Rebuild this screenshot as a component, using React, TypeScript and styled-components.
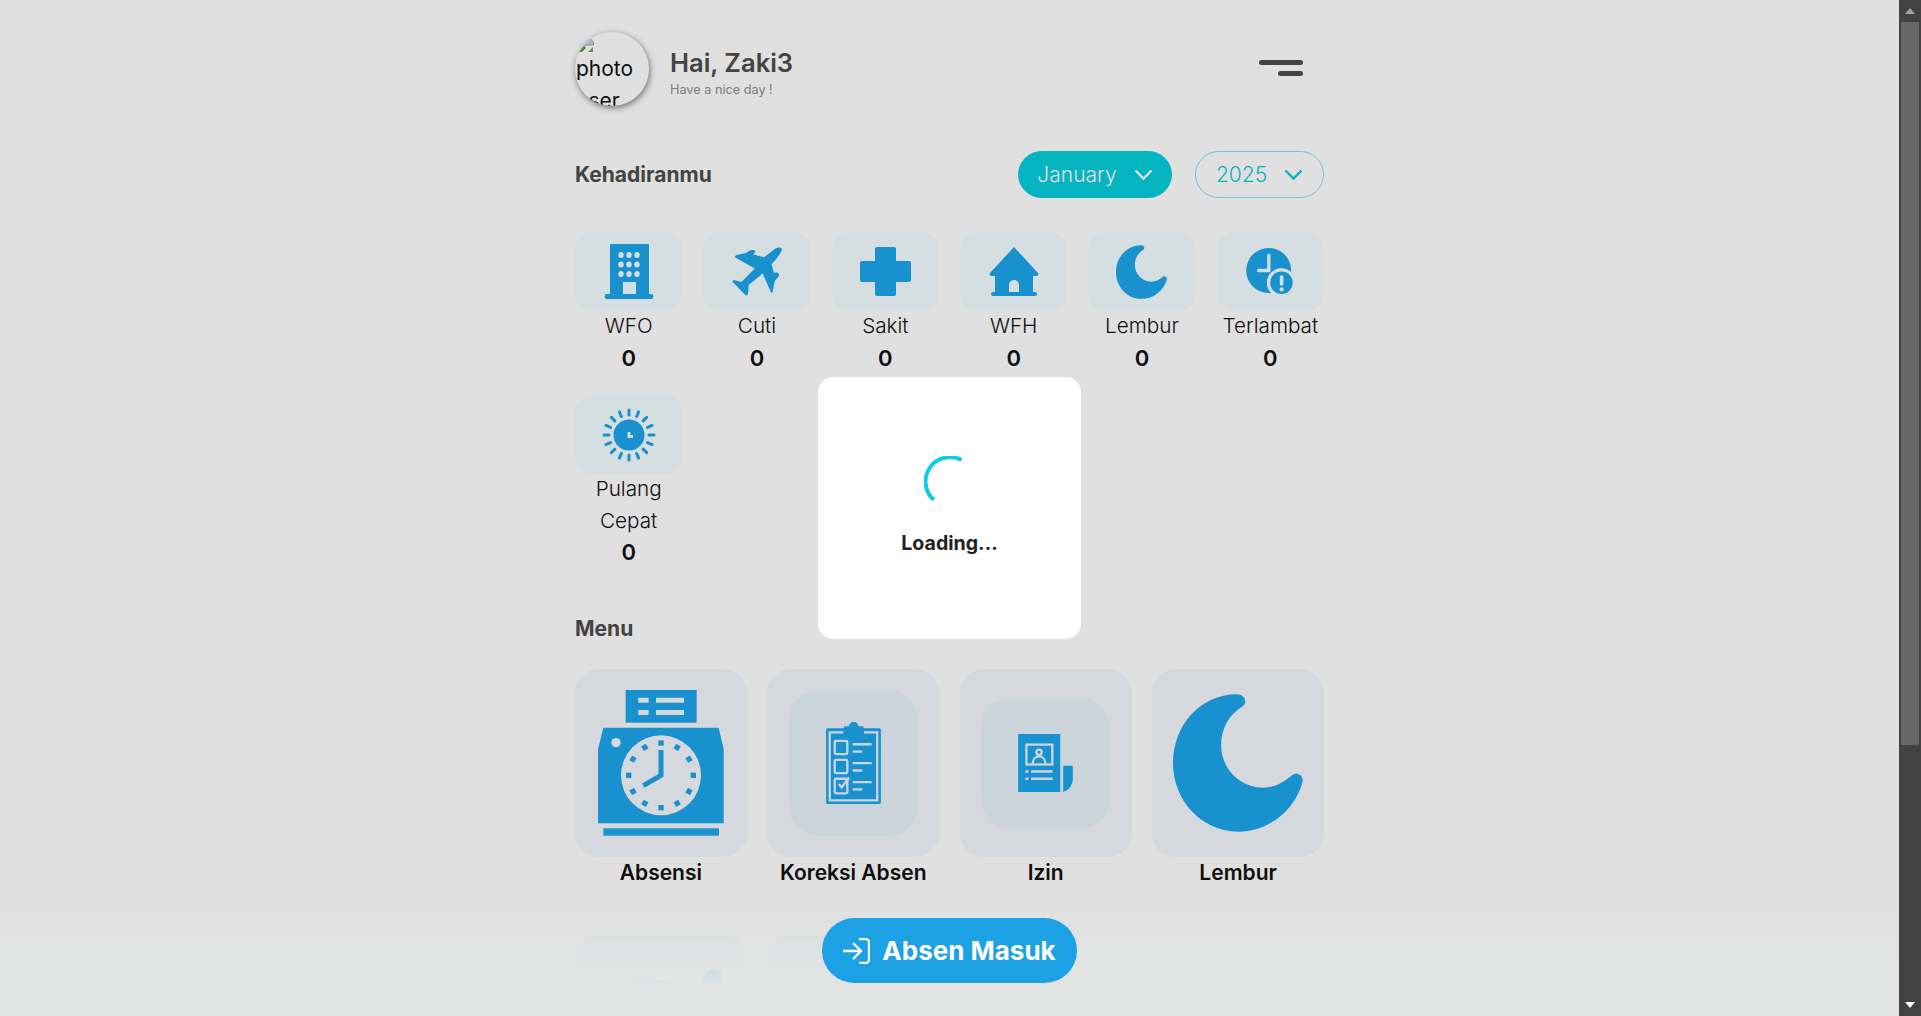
import React from "react";
import styled, { createGlobalStyle } from "styled-components";

const Global = createGlobalStyle`
  html, body { margin: 0; padding: 0; height: 100%; overflow: hidden; background: #fff; }
  body { font-family: Inter, "Open Sans", "Liberation Sans", sans-serif; }
  * { box-sizing: border-box; }
`;

const Screen = styled.div`
  display: flex;
  height: 100vh;
  position: relative;
`;
const Viewport = styled.main`
  flex: 1;
  min-width: 0;
  overflow-y: scroll;
  scrollbar-width: none;
  background: #fff;
`;
const Column = styled.div`
  width: 749px;
  margin: 0 auto;
  padding: 32px 0 241px;
`;
const Header = styled.header`
  display: flex;
  align-items: center;
  height: 74px;
`;
const Avatar = styled.div`
  width: 74px;
  height: 74px;
  flex: none;
  border-radius: 50%;
  overflow: hidden;
  padding: 5px 0 0 1px;
  font-size: 21px;
  line-height: 31.5px;
  color: #111;
  box-shadow: 1px 2px 6px rgba(0, 0, 0, 0.5);
  svg { display: block; margin-left: 2px; }
`;
const Greeting = styled.div`
  margin-left: 21px;
  flex: 1;
  padding-top: 5px;
`;
const Hello = styled.h1`
  margin: 0;
  font-size: 25.5px;
  line-height: 36px;
  font-weight: 600;
  color: #4d4d4d;
`;
const Sub = styled.p`
  margin: 0;
  font-size: 12.7px;
  line-height: 18px;
  color: #8f8f8f;
`;
const Burger = styled.button`
  display: flex;
  flex-direction: column;
  align-items: flex-end;
  gap: 6px;
  width: 44px;
  margin-right: 21px;
  padding: 0;
  border: 0;
  background: none;
  transform: translateY(-1px);
`;
const BurgerBar = styled.span<{ $w: number }>`
  display: block;
  width: ${(p) => p.$w}px;
  height: 5px;
  border-radius: 3px;
  background: #4d4d4d;
`;
const SectionRow = styled.div`
  display: flex;
  align-items: center;
  justify-content: space-between;
  margin-top: 45px;
`;
const SectionTitle = styled.h2`
  margin: 0;
  font-size: 21px;
  line-height: 32px;
  font-weight: 650;
  color: #4d4d4d;
`;
const Pills = styled.div`
  display: flex;
  gap: 23px;
`;
const Pill = styled.div<{ $on?: boolean; $w: number }>`
  display: flex;
  align-items: center;
  justify-content: center;
  gap: 17px;
  width: ${(p) => p.$w}px;
  height: 47px;
  border-radius: 24px;
  font-size: 21px;
  font-weight: 350;
  color: ${(p) => (p.$on ? "#fff" : "#05cddc")};
  background: ${(p) => (p.$on ? "#05cddc" : "transparent")};
  border: 1px solid ${(p) => (p.$on ? "#05cddc" : "#7fe3ea")};
`;
const StatGrid = styled.div`
  display: grid;
  grid-template-columns: repeat(6, 1fr);
  column-gap: 21px;
  row-gap: 21px;
  margin-top: 34px;
`;
const Stat = styled.div`
  display: flex;
  flex-direction: column;
  align-items: center;
  text-align: center;
`;
const StatTile = styled.div`
  display: flex;
  align-items: center;
  justify-content: center;
  width: 100%;
  height: 79px;
  border-radius: 18px;
  background: #f3fdff;
`;
const StatLabel = styled.div`
  font-size: 20.7px;
  line-height: 31.5px;
  font-weight: 340;
  color: #111;
  transform: translateY(-1px);
`;
const StatValue = styled.div`
  font-size: 22px;
  line-height: 31.5px;
  font-weight: 600;
  color: #111;
`;
const MenuTitle = styled(SectionTitle)`
  margin-top: 44px;
`;
const MenuGrid = styled.div`
  display: grid;
  grid-template-columns: repeat(4, 1fr);
  column-gap: 20.67px;
  row-gap: 47px;
  margin-top: 24.5px;
`;
const MenuItem = styled.div`
  text-align: center;
`;
const MenuTile = styled.div`
  display: flex;
  align-items: center;
  justify-content: center;
  height: 188px;
  border-radius: 24px;
  background: #f3f7fc;
`;
const MenuInner = styled.div<{ $h: number }>`
  display: flex;
  align-items: center;
  justify-content: center;
  width: 129px;
  height: ${(p) => p.$h}px;
  border-radius: 30px;
  background: #e9f2fa;
`;
const MenuLabel = styled.div`
  font-size: 21px;
  line-height: 31px;
  font-weight: 600;
  color: #111;
`;
const Overlay = styled.div`
  position: absolute;
  inset: 0 22px 0 0;
  display: flex;
  align-items: center;
  justify-content: center;
  background: rgba(0, 0, 0, 0.12);
`;
const Modal = styled.div`
  display: flex;
  flex-direction: column;
  align-items: center;
  justify-content: center;
  gap: 20px;
  width: 263px;
  height: 262px;
  border-radius: 15px;
  background: #fff;
  position: relative;
  z-index: 2;
`;
const LoadingText = styled.div`
  margin-bottom: 2px;
  font-size: 19.6px;
  line-height: 30px;
  font-weight: 700;
  color: #222;
`;
const BottomBar = styled.div`
  position: absolute;
  left: 0;
  right: 22px;
  bottom: 0;
  height: 121px;
  display: flex;
  justify-content: center;
  padding-top: 23px;
  background: linear-gradient(
    to bottom,
    rgba(227, 228, 228, 0) 0%,
    rgba(227, 228, 228, 0.75) 45%,
    rgba(227, 228, 228, 0.9) 62%,
    #e3e4e4 74%
  );
`;
const PunchButton = styled.button`
  display: flex;
  align-items: center;
  justify-content: center;
  gap: 12px;
  width: 255px;
  height: 65px;
  border: 0;
  border-radius: 33px;
  background: #1ca2e4;
  color: #fff;
  font: 700 26px Inter, "Open Sans", sans-serif;
`;
const Rail = styled.aside`
  flex: none;
  width: 22px;
  display: flex;
  flex-direction: column;
  align-items: center;
  background: #424242;
`;
const RailButton = styled.div`
  flex: none;
  height: 22px;
  width: 100%;
  display: flex;
  align-items: center;
  justify-content: center;
`;
const RailThumb = styled.div`
  flex: none;
  width: 18px;
  height: 723px;
  background: #686868;
`;
const RailSpace = styled.div`
  flex: 1;
`;

const BLUE = "#1ca5eb";
const PALE = "#f3fdff";

const Building = () => (
  <svg width="52" height="55" viewBox="0 0 52 55">
    <path fill={BLUE} d="M7 1a1 1 0 0 1 1-1h37a1 1 0 0 1 1 1v49h3a3 3 0 0 1 0 5H3a3 3 0 0 1 0-5h4z" />
    {[0, 1, 2].map((r) =>
      [0, 1, 2].map((c) => <ellipse key={`${r}${c}`} cx={18 + c * 8} cy={11 + r * 9.5} rx="2.7" ry="3" fill={PALE} />)
    )}
    <rect x="20" y="38" width="13" height="12" fill={PALE} />
  </svg>
);
const Plane = () => (
  <svg width="50" height="49" viewBox="38 35 150 148">
    <path fill={BLUE} d="M170 39C178 35 188 35 188 42C188 50 172 72 157 87L164 113L174 112C180 113 181 120 177 126L167 137L160 172L156 173L130 115L88 150L86 178L80 182L38 139L43 135L66 141L106 100L45 65L50 59L80 53L88 47C95 43 106 42 108 48C108 52 104 55 100 57L134 66Z" />
  </svg>
);
const Cross = () => (
  <svg width="51" height="49" viewBox="0 0 51 49">
    <path fill={BLUE} d="M15 2a2 2 0 0 1 2-2h17a2 2 0 0 1 2 2v12h13a2 2 0 0 1 2 2v17a2 2 0 0 1-2 2H36v12a2 2 0 0 1-2 2H17a2 2 0 0 1-2-2V35H2a2 2 0 0 1-2-2V16a2 2 0 0 1 2-2h13z" />
  </svg>
);
const House = () => (
  <svg width="50" height="49" viewBox="0 0 50 49">
    <path fill={BLUE} d="M25 0l24 26a2 2 0 0 1-1.500 3H44v16h2a2 2 0 0 1 0 4H4a2 2 0 0 1 0-4h2V29H2.500A2 2 0 0 1 1 26z" />
    <path fill={PALE} d="M20 45v-7a5 5 0 0 1 10 0v7z" />
  </svg>
);
const Moon = ({ w, h }: { w: number; h: number }) => (
  <svg width={w} height={h} viewBox="668 102 392 414" preserveAspectRatio="none">
    <path fill={BLUE} d="M860 103C885 103 895 128 876 140C838 163 813 205 813 255C813 326 870 383 940 383C972 383 1000 368 1025 347C1040 333 1064 345 1058 368C1035 450 957 515 865 515C756 515 668 423 668 310C668 197 750 103 860 103Z" />
  </svg>
);
const Late = () => (
  <svg width="48" height="48" viewBox="48 40 145 145">
    <circle cx="116.500" cy="108" r="68" fill={BLUE} />
    <path d="M117 62V108H86" fill="none" stroke={PALE} strokeWidth="10" strokeLinecap="round" />
    <circle cx="155" cy="145" r="44" fill={PALE} />
    <circle cx="155" cy="145" r="34" fill={BLUE} />
    <rect x="150" y="122" width="11" height="32" rx="5.500" fill={PALE} />
    <circle cx="155.500" cy="165" r="6.500" fill={PALE} />
  </svg>
);
const Sun = () => (
  <svg width="54" height="54" viewBox="-27 -27 54 54">
    {Array.from({ length: 16 }).map((_, i) => (
      <line key={i} x1="0" y1="-20" x2="0" y2="-25" stroke={BLUE} strokeWidth="3" strokeLinecap="round" transform={`rotate(${i * 22.5})`} />
    ))}
    <circle r="15.500" fill={BLUE} />
    <path d="M0-3v4.500h4" fill="none" stroke={PALE} strokeWidth="3" />
  </svg>
);
const Chevron = ({ color }: { color: string }) => (
  <svg width="19" height="12" viewBox="0 0 19 12">
    <path d="M1.500 1.500l8 8 8-8" fill="none" stroke={color} strokeWidth="2.400" />
  </svg>
);
const TimeClock = () => {
  const ticks = Array.from({ length: 12 }).map((_, i) => i * 30);
  return (
    <svg width="126" height="146" viewBox="114 90 378 438">
      <rect x="197" y="90" width="213" height="98" fill={BLUE} />
      <path fill="#f3f7fc" d="M235 113h31v15h-31zM288 113h84v15h-84zM235 150h31v15h-31zM288 150h84v15h-84z" />
      <path fill={BLUE} d="M130 203H476L491 268V490H114V268Z" />
      <circle cx="168" cy="248" r="14" fill="#f3f7fc" />
      <circle cx="303" cy="346" r="120" fill="#f3f7fc" />
      {ticks.map((a) => (
        <rect key={a} x="295" y="241" width="16" height="16" fill={BLUE} transform={`rotate(${a} 303 346)`} />
      ))}
      <path d="M303 270V346L250 377" fill="none" stroke={BLUE} strokeWidth="15" />
      <rect x="130" y="505" width="347" height="22" fill={BLUE} />
    </svg>
  );
};
const Clipboard = () => (
  <svg width="55" height="82" viewBox="798 185 165 247">
    <path fill={BLUE} d="M803 204H852V198H866C870 180 892 180 896 198H910V204H958a5 5 0 0 1 5 5V427a5 5 0 0 1-5 5H803a5 5 0 0 1-5-5V209a5 5 0 0 1 5-5z" />
    <g fill="none" stroke="#e9f2fa" strokeWidth="7">
      <path d="M850 216H809V421H952V216H912" />
      <rect x="824" y="242" width="38" height="40" rx="4" />
      <rect x="824" y="299" width="38" height="40" rx="4" />
      <rect x="824" y="356" width="38" height="44" rx="4" />
      <path d="M878 252H935M878 274H907M878 309H935M878 331H907M878 366H935M878 388H907" />
      <path d="M836 372l9 10 22-30" />
    </g>
  </svg>
);
const Document = () => (
  <svg width="55" height="58" viewBox="204 222 165 175">
    <rect x="204" y="222" width="127" height="175" fill={BLUE} />
    <path fill={BLUE} d="M340 318H369V358A40 40 0 0 1 340 397Z" />
    <g fill="none" stroke="#e9f2fa" strokeWidth="7">
      <rect x="229" y="254" width="78" height="60" />
      <circle cx="267" cy="277" r="8" />
      <path d="M248 312c0-30 38-30 38 0" />
    </g>
    <path stroke="#e9f2fa" strokeWidth="8" d="M243 335H308M243 357H308M226 335H235M226 357H235" />
  </svg>
);
const FadedIcon = () => (
  <svg width="126" height="146" viewBox="0 0 126 146">
    <path fill={BLUE} d="M103 28C108 8 124 8 126 28V146H0V36C30 26 48 16 60 24Z" />
  </svg>
);
const LoginIcon = () => (
  <svg width="27" height="26" viewBox="0 0 27 26">
    <path d="M16 1.200h7a3 3 0 0 1 3 3v17.600a3 3 0 0 1-3 3h-7M0 13h18M10 5l8 8-8 8" fill="none" stroke="#fff" strokeWidth="2.300" />
  </svg>
);
const BrokenImage = () => (
  <svg width="16" height="16" viewBox="0 0 16 16">
    <path fill="#c3d2ea" stroke="#a0a0a0" strokeWidth="1" d="M0.500 0.500H11L15.500 5V8L8 8L0.500 15.500Z" />
    <path fill="#5aa03c" d="M1 15L6 9L8 11L4 15Z" />
    <path fill="#7a9a6a" d="M10 15L15 10V15Z" />
  </svg>
);
const Spinner = () => (
  <svg width="52" height="52" viewBox="0 0 52 52">
    <path d="M37.500 3.900A24.500 24.500 0 0 0 9.700 43.800" fill="none" stroke="#0dcde0" strokeWidth="4" />
  </svg>
);

const stats: { label: string; icon: React.ReactNode }[] = [
  { label: "WFO", icon: <Building /> },
  { label: "Cuti", icon: <Plane /> },
  { label: "Sakit", icon: <Cross /> },
  { label: "WFH", icon: <House /> },
  { label: "Lembur", icon: <Moon w={51} h={54} /> },
  { label: "Terlambat", icon: <Late /> },
  { label: "Pulang Cepat", icon: <Sun /> },
];

const menus: { key: string; label?: string; icon: React.ReactNode }[] = [
  { key: "absensi", label: "Absensi", icon: <TimeClock /> },
  { key: "koreksi", label: "Koreksi Absen", icon: <MenuInner $h={146}><Clipboard /></MenuInner> },
  { key: "izin", label: "Izin", icon: <MenuInner $h={131}><Document /></MenuInner> },
  { key: "lembur", label: "Lembur", icon: <Moon w={130} h={138} /> },
  { key: "faded-a", icon: <FadedIcon /> },
  { key: "faded-b", icon: <MenuInner $h={131} /> },
];

export default function App() {
  return (
    <>
      <Global />
      <Screen>
        <Viewport>
          <Column>
            <Header>
              <Avatar>
                <BrokenImage />
                photo user
              </Avatar>
              <Greeting>
                <Hello>Hai, Zaki3</Hello>
                <Sub>Have a nice day !</Sub>
              </Greeting>
              <Burger aria-label="Menu">
                <BurgerBar $w={44} />
                <BurgerBar $w={25} />
              </Burger>
            </Header>
            <SectionRow>
              <SectionTitle>Kehadiranmu</SectionTitle>
              <Pills>
                <Pill $on $w={154}>January <Chevron color="#fff" /></Pill>
                <Pill $w={129}>2025 <Chevron color="#05cddc" /></Pill>
              </Pills>
            </SectionRow>
            <StatGrid>
              {stats.map((s) => (
                <Stat key={s.label}>
                  <StatTile>{s.icon}</StatTile>
                  <StatLabel>{s.label}</StatLabel>
                  <StatValue>0</StatValue>
                </Stat>
              ))}
            </StatGrid>
            <MenuTitle>Menu</MenuTitle>
            <MenuGrid>
              {menus.map((m) => (
                <MenuItem key={m.key}>
                  <MenuTile>{m.icon}</MenuTile>
                  {m.label && <MenuLabel>{m.label}</MenuLabel>}
                </MenuItem>
              ))}
            </MenuGrid>
          </Column>
        </Viewport>
        <Overlay>
          <Modal>
            <Spinner />
            <LoadingText>Loading...</LoadingText>
          </Modal>
        </Overlay>
        <BottomBar>
          <PunchButton>
            <LoginIcon />
            Absen Masuk
          </PunchButton>
        </BottomBar>
        <Rail>
          <RailButton>
            <svg width="10" height="6" viewBox="0 0 10 6"><path d="M5 0l5 6H0z" fill="#a3a3a3" /></svg>
          </RailButton>
          <RailThumb />
          <RailSpace />
          <RailButton>
            <svg width="10" height="6" viewBox="0 0 10 6"><path d="M0 0h10L5 6z" fill="#fff" /></svg>
          </RailButton>
        </Rail>
      </Screen>
    </>
  );
}
